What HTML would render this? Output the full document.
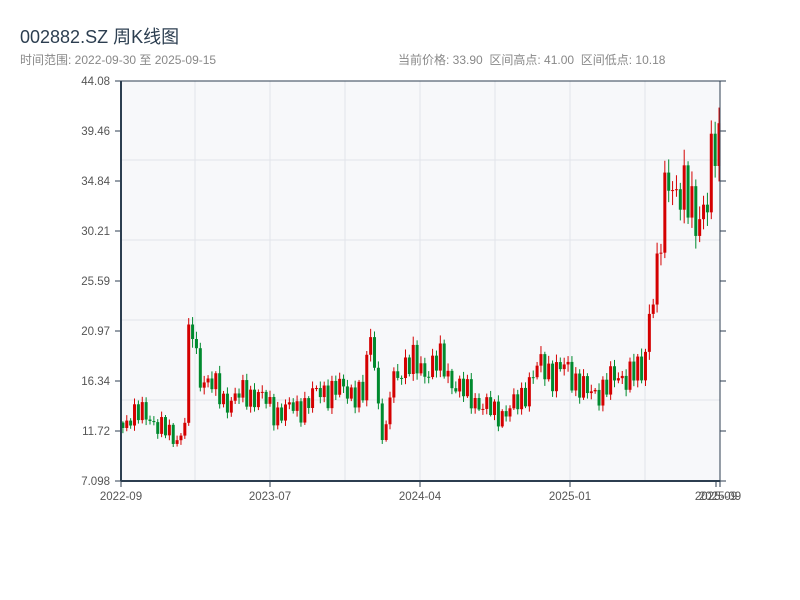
<!DOCTYPE html>
<html><head><meta charset="utf-8"><style>
body{margin:0;width:800px;height:600px;background:#fff;font-family:"Liberation Sans","Noto Sans CJK SC",sans-serif;position:relative;overflow:hidden}
.t{position:absolute;left:20px;top:23px;font-size:18px;color:#2c3e50}
.s{position:absolute;top:51px;font-size:12px;color:#888}
</style></head><body>
<div class="t">002882.SZ 周K线图</div>
<div class="s" style="left:20px">时间范围: 2022-09-30 至 2025-09-15</div>
<div class="s" style="left:398px">当前价格: 33.90 &nbsp;区间高点: 41.00 &nbsp;区间低点: 10.18</div>
<svg id="c" width="800" height="600" style="position:absolute;left:0;top:0" font-family="Liberation Sans, sans-serif" font-size="11.5" fill="#555"></svg>
<script>
const s=document.getElementById('c');let h='';
const Y=p=>481-(p-7.098)*10.816;
h+='<rect x="121" y="81" width="599" height="400" fill="#f7f8fa"/>';
[195,270,345,420,495,570,645].forEach(x=>h+=`<line x1="${x}" y1="81" x2="${x}" y2="481" stroke="#e2e4ea"/>`);
[160,240,320,400].forEach(y=>h+=`<line x1="121" y1="${y}" x2="720" y2="${y}" stroke="#e2e4ea"/>`);
const L=['44.08','39.46','34.84','30.21','25.59','20.97','16.34','11.72','7.098'];
L.forEach((l,i)=>{const y=81+i*50;h+=`<line x1="115" y1="${y}" x2="121" y2="${y}" stroke="#2c3e50"/><line x1="720" y1="${y}" x2="726" y2="${y}" stroke="#2c3e50"/><text x="110" y="${y+4}" text-anchor="end">${l}</text>`});
const W=[[0,12],[8,13.5],[30,12.8],[50,11],[60,11.5],[63,14],[66,20],[70,21],[75,17],[85,16.5],[100,14.5],[120,15],[135,15.2],[150,13.5],[175,13.8],[200,15.5],[230,15.5],[240,14.8],[247,20],[250,22],[253,16],[258,12],[263,11],[268,16],[280,18],[300,17.5],[320,18],[335,15.5],[350,15],[360,13.8],[385,13.3],[395,14.5],[405,16],[420,18],[430,17],[445,17.5],[465,15],[485,16],[500,17],[515,17],[520,16.8],[525,22],[530,25],[535,26],[540,31],[545,36],[550,35],[555,34],[560,33],[575,32],[585,32.5],[590,37],[595,40],[600,34]];
function at(t){for(let i=1;i<W.length;i++)if(t<=W[i][0]){const a=W[i-1],b=W[i];return a[1]+(b[1]-a[1])*(t-a[0])/(b[0]-a[0])}return 34}
const N=155;let prev=12.5;
for(let i=0;i<N;i++){const t=i*600/N;let c=at(t)*(1+0.07*Math.sin(i*2.7)+0.04*Math.sin(i*5.3));const o=prev;const x=121+t+1.9;
const hi=Math.max(o,c)*(1+0.01+0.03*Math.abs(Math.sin(i*1.7))),lo=Math.min(o,c)*(1-0.01-0.03*Math.abs(Math.cos(i*2.1)));
const col=c>=o?'#d40000':'#008a2e';
h+=`<line x1="${x}" y1="${Y(hi)}" x2="${x}" y2="${Y(lo)}" stroke="${col}" stroke-width="1"/>`;
h+=`<rect x="${x-1.5}" y="${Y(Math.max(o,c))}" width="3" height="${Math.max(1,Math.abs(Y(o)-Y(c)))}" fill="${col}"/>`;
prev=c;}
h+='<line x1="121" y1="81" x2="720" y2="81" stroke="#2c3e50"/><line x1="121" y1="81" x2="121" y2="481" stroke="#2c3e50" stroke-width="2"/><line x1="720" y1="81" x2="720" y2="481" stroke="#2c3e50"/><line x1="121" y1="481" x2="720" y2="481" stroke="#2c3e50" stroke-width="2"/>';
[[121,'2022-09'],[270,'2023-07'],[420,'2024-04'],[570,'2025-01'],[716,'2025-09'],[720,'2025-09']].forEach(([x,l])=>h+=`<line x1="${x}" y1="481" x2="${x}" y2="487" stroke="#2c3e50"/><text x="${x}" y="500" text-anchor="middle">${l}</text>`);
s.innerHTML=h;
</script>
</body></html>
